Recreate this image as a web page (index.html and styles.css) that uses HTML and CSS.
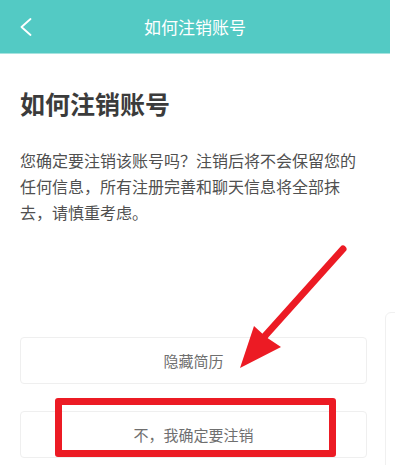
FILE: index.html
```html
<!DOCTYPE html>
<html lang="zh-CN">
<head>
<meta charset="utf-8">
<title>如何注销账号</title>
<link rel="stylesheet" href="styles.css">
</head>
<body>
<div class="page">
  <header class="topbar">
    <svg class="back" width="12" height="18" viewBox="0 0 12 18">
      <polyline points="10.5,1 1.5,9 10.5,17" fill="none" stroke="#fff" stroke-width="1.8" stroke-linecap="round" stroke-linejoin="round"/>
    </svg>
    <div class="topbar-title">如何注销账号</div>
  </header>
  <main class="content">
    <h1 class="title">如何注销账号</h1>
    <p class="desc">您确定要注销该账号吗？注销后将不会保留您的任何信息，所有注册完善和聊天信息将全部抹去，请慎重考虑。</p>
    <div class="actions">
      <div class="btn">隐藏简历</div>
      <div class="btn">不，我确定要注销</div>
    </div>
  </main>
  <div class="peek"></div>
  <div class="highlight"></div>
  <svg class="arrow" width="395" height="465" viewBox="0 0 395 465">
    <line x1="343" y1="249" x2="264" y2="337" stroke="#ec1b24" stroke-width="7" stroke-linecap="round"/>
    <polygon points="240,368 254,326 266,337 281,347" fill="#ec1b24"/>
  </svg>
</div>
</body>
</html>
```
FILE: styles.css
```css
html, body {
  margin: 0;
  padding: 0;
  background: #fff;
}
body {
  font-family: "Noto Sans CJK SC", "Noto Sans", sans-serif;
}
.page {
  position: relative;
  width: 395px;
  height: 465px;
  overflow: hidden;
}
.topbar {
  width: 390px;
  height: 53px;
  background: #53cac4;
  border-bottom: 1px solid #a6e3df;
  display: flex;
  align-items: center;
  position: relative;
}
.back {
  margin-left: 20px;
}
.topbar-title {
  position: absolute;
  left: 0;
  right: 0;
  text-align: center;
  color: #fff;
  font-size: 17px;
  line-height: 53px;
}
.content {
  width: 347px;
  padding: 32px 0 0 20px;
}
.title {
  margin: 0;
  font-size: 25px;
  line-height: 35px;
  font-weight: bold;
  color: #3b3b3b;
}
.desc {
  margin: 26px 0 0;
  font-size: 16px;
  line-height: 26px;
  color: #505050;
}
.actions {
  margin-top: 112px;
  display: flex;
  flex-direction: column;
  gap: 27px;
}
.btn {
  height: 45px;
  border: 1px solid #efefef;
  border-radius: 4px;
  display: flex;
  align-items: center;
  justify-content: center;
  font-size: 15px;
  color: #6f6f6f;
}
.peek {
  position: absolute;
  left: 385px;
  top: 312px;
  width: 30px;
  height: 200px;
  border: 1px solid #f0f0f0;
  border-radius: 6px;
}
.highlight {
  position: absolute;
  left: 55px;
  top: 398px;
  width: 267px;
  height: 45px;
  border: 7px solid #ec1b24;
  border-radius: 3px;
}
.arrow {
  position: absolute;
  left: 0;
  top: 0;
  pointer-events: none;
}
```
